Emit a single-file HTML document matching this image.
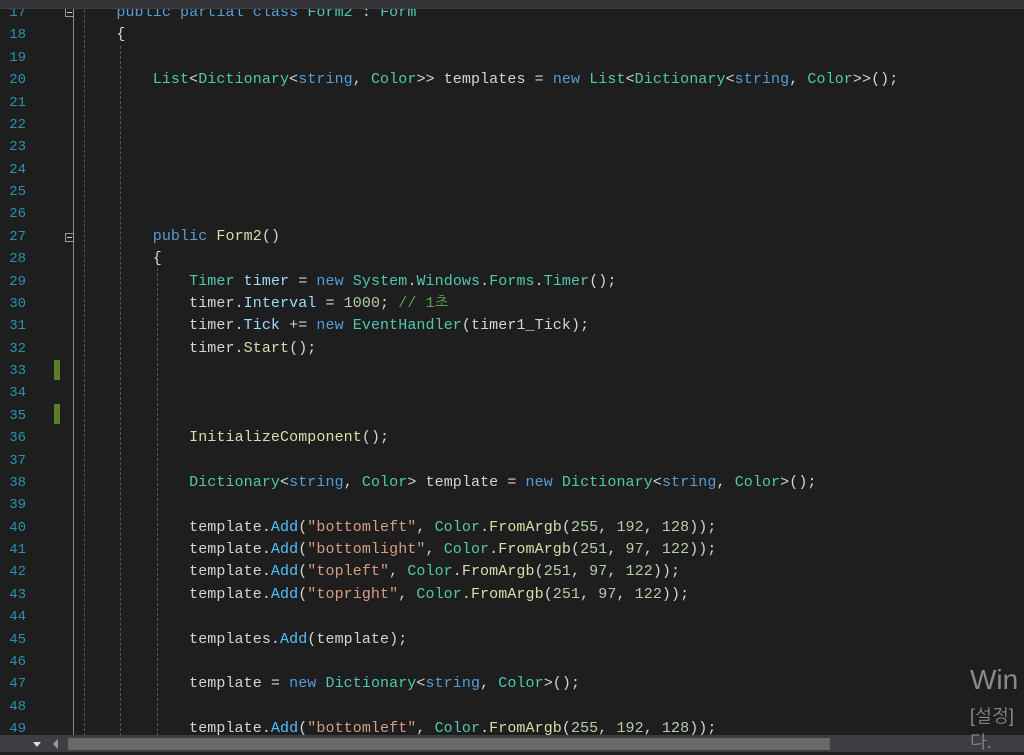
<!DOCTYPE html>
<html><head><meta charset="utf-8"><style>
body{margin:0;width:1024px;height:752px;background:#1e1e1e;overflow:hidden;position:relative;font-family:"Liberation Mono","NanumGothic",monospace;}
.top{position:absolute;left:0;top:0;width:1024px;height:8px;background:#333337;border-bottom:1px solid #3f3f46;z-index:2}
.ln{position:absolute;left:0;width:26px;text-align:right;color:#2b91af;font-size:14px;line-height:22.375px}
.code{position:absolute;left:80px;top:2px;font-size:15px;line-height:22.375px;color:#d4d4d4;white-space:pre;letter-spacing:0.09px}
.k{color:#569cd6}.t{color:#4ec9b0}.s{color:#d69d85}.n{color:#b5cea8}.c{color:#57a64a}.m{color:#4fc1ff}.v{color:#9cdcfe}.y{color:#dcdcaa}
.g{position:absolute;border-left:1px dashed #555;}
.fold{position:absolute;left:65px;width:9px;height:9px;border:1px solid #999;box-sizing:border-box;background:#1e1e1e}
.fold:after{content:"";position:absolute;left:1px;top:3px;width:5px;height:1px;background:#ccc}
.mk{position:absolute;left:54px;width:6px;height:20px;background:#5c7e2a}
.sb{position:absolute;left:0;top:735px;width:1024px;height:17px;background:#3e3e42}
</style></head><body>
<div class="top"></div>
<div style="position:absolute;left:73px;top:10px;width:1px;height:726px;background:#888"></div>
<div class="g" style="left:84px;top:0;height:736px"></div>
<div class="g" style="left:120px;top:46px;height:690px"></div>
<div class="g" style="left:157px;top:258px;height:478px"></div>
<div class="fold" style="top:8px"></div>
<div class="fold" style="top:233px"></div>
<div class="mk" style="top:360px"></div>
<div class="mk" style="top:404px"></div>
<div class="ln" style="top:2px">17<br>18<br>19<br>20<br>21<br>22<br>23<br>24<br>25<br>26<br>27<br>28<br>29<br>30<br>31<br>32<br>33<br>34<br>35<br>36<br>37<br>38<br>39<br>40<br>41<br>42<br>43<br>44<br>45<br>46<br>47<br>48<br>49</div>
<div class="code">    <span class="k">public partial class</span> <span class="t">Form2</span> : <span class="t">Form</span>
    {

        <span class="t">List</span>&lt;<span class="t">Dictionary</span>&lt;<span class="k">string</span>, <span class="t">Color</span>&gt;&gt; templates = <span class="k">new</span> <span class="t">List</span>&lt;<span class="t">Dictionary</span>&lt;<span class="k">string</span>, <span class="t">Color</span>&gt;&gt;();






        <span class="k">public</span> <span class="y">Form2</span>()
        {
            <span class="t">Timer</span> <span class="v">timer</span> = <span class="k">new</span> <span class="t">System</span>.<span class="t">Windows</span>.<span class="t">Forms</span>.<span class="t">Timer</span>();
            timer.<span class="v">Interval</span> = <span class="n">1000</span>; <span class="c">// 1초</span>
            timer.<span class="v">Tick</span> += <span class="k">new</span> <span class="t">EventHandler</span>(timer1_Tick);
            timer.<span class="y">Start</span>();



            <span class="y">InitializeComponent</span>();

            <span class="t">Dictionary</span>&lt;<span class="k">string</span>, <span class="t">Color</span>&gt; template = <span class="k">new</span> <span class="t">Dictionary</span>&lt;<span class="k">string</span>, <span class="t">Color</span>&gt;();

            template.<span class="m">Add</span>(<span class="s">"bottomleft"</span>, <span class="t">Color</span>.<span class="y">FromArgb</span>(<span class="n">255</span>, <span class="n">192</span>, <span class="n">128</span>));
            template.<span class="m">Add</span>(<span class="s">"bottomlight"</span>, <span class="t">Color</span>.<span class="y">FromArgb</span>(<span class="n">251</span>, <span class="n">97</span>, <span class="n">122</span>));
            template.<span class="m">Add</span>(<span class="s">"topleft"</span>, <span class="t">Color</span>.<span class="y">FromArgb</span>(<span class="n">251</span>, <span class="n">97</span>, <span class="n">122</span>));
            template.<span class="m">Add</span>(<span class="s">"topright"</span>, <span class="t">Color</span>.<span class="y">FromArgb</span>(<span class="n">251</span>, <span class="n">97</span>, <span class="n">122</span>));

            templates.<span class="m">Add</span>(template);

            template = <span class="k">new</span> <span class="t">Dictionary</span>&lt;<span class="k">string</span>, <span class="t">Color</span>&gt;();

            template.<span class="m">Add</span>(<span class="s">"bottomleft"</span>, <span class="t">Color</span>.<span class="y">FromArgb</span>(<span class="n">255</span>, <span class="n">192</span>, <span class="n">128</span>));</div>
<div class="sb"></div>
<div style="position:absolute;left:33px;top:742px;width:0;height:0;border-left:4px solid transparent;border-right:4px solid transparent;border-top:5px solid #ddd"></div>
<div style="position:absolute;left:53px;top:739px;width:0;height:0;border-top:5px solid transparent;border-bottom:5px solid transparent;border-right:5px solid #999"></div>
<div style="position:absolute;left:68px;top:738px;width:762px;height:12px;background:#686868"></div>
<div style="position:absolute;left:970px;top:664px;color:#8a8a8a;font-family:'Liberation Sans',sans-serif;font-size:28px">Win</div>
<div style="position:absolute;left:970px;top:703px;color:#8a8a8a;font-family:'Liberation Sans','NanumGothic',sans-serif;font-size:18px;line-height:26px">[설정]<br>다.</div>
</body></html>
